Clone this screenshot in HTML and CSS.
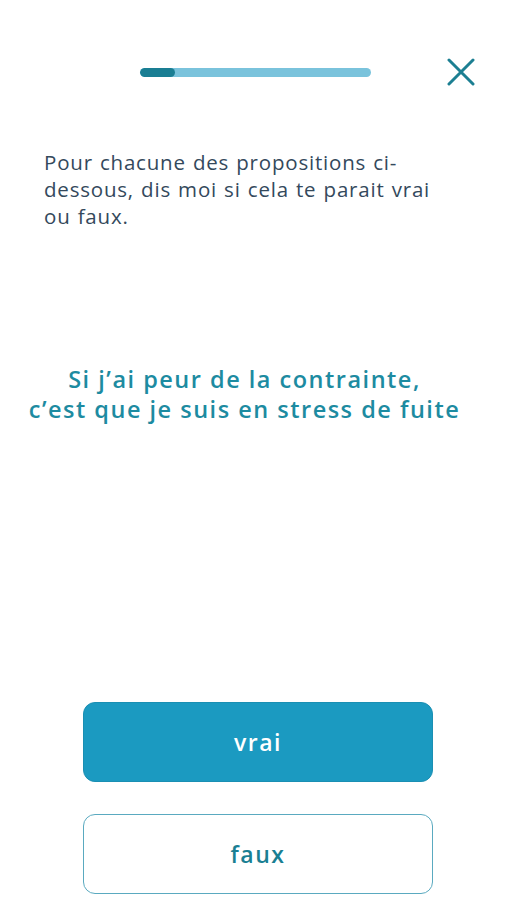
FILE: index.html
```html
<!DOCTYPE html>
<html lang="fr">
<head>
<meta charset="utf-8">
<link rel="stylesheet" href="styles.css">
</head>
<body>
<div class="screen">
  <header class="topbar">
    <div class="progress"><div class="progress-fill" style="width:15%"></div></div>
    <button class="close" aria-label="Fermer">
      <svg width="28" height="28" viewBox="0 0 28 28"><path d="M2 2 L26 26 M26 2 L2 26" stroke="#1c7f92" stroke-width="3" stroke-linecap="round" fill="none"/></svg>
    </button>
  </header>
  <p class="instruction">Pour chacune des propositions ci-dessous, dis moi si cela te parait vrai ou faux.</p>
  <p class="question">Si j’ai peur de la contrainte,<br>c’est que je suis en stress de fuite</p>
  <div class="answers">
    <button class="btn btn-primary">vrai</button>
    <button class="btn btn-outline">faux</button>
  </div>
</div>
</body>
</html>
```
FILE: styles.css
```css
* { box-sizing: border-box; }
html, body { margin: 0; padding: 0; background: #ffffff; }
body { font-family: "Open Sans", "DejaVu Sans", sans-serif; }
.screen {
  width: 507px;
  height: 900px;
  display: flex;
  flex-direction: column;
}
.topbar {
  display: flex;
  align-items: center;
  padding: 58px 0 0 140px;
  height: 85px;
}
.progress {
  width: 231px;
  height: 9px;
  border-radius: 5px;
  background: #7ac3dc;
  overflow: hidden;
  margin-top: 1px;
}
.progress-fill {
  height: 100%;
  background: #1a7e93;
  border-radius: 5px;
}
.close {
  margin-left: 76px;
  padding: 0;
  border: 0;
  background: none;
  width: 28px;
  height: 28px;
  display: flex;
}
.instruction {
  margin: 64px 0 0 44px;
  width: 410px;
  font-size: 20.5px;
  line-height: 27px;
  color: #34495c;
  letter-spacing: 0.8px;
  word-spacing: 1px;
}
.question {
  margin: 134px 0 0;
  padding-right: 18px;
  text-align: center;
  font-size: 23.5px;
  line-height: 30px;
  font-weight: 600;
  color: #1d8ba1;
  letter-spacing: 1.5px;
}
.answers {
  margin-top: auto;
  padding: 0 74px 6px 83px;
  display: flex;
  flex-direction: column;
  gap: 32px;
}
.btn {
  height: 80px;
  border-radius: 12px;
  font-family: inherit;
  font-size: 23px;
  font-weight: 600;
  letter-spacing: 1.5px;
}
.btn-primary {
  background: #1b9ac1;
  color: #ffffff;
  border: 1px solid #1a8fb3;
}
.btn-outline {
  background: #ffffff;
  color: #1a7f93;
  border: 1.5px solid #5aaac0;
}
```
